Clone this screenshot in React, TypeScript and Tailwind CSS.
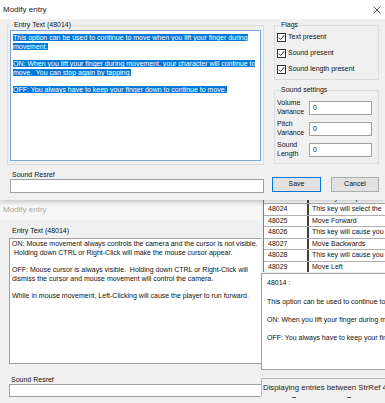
import React from "react";

const Check = () => (
  <div className="w-[9px] h-[9px] bg-white border border-[#333] flex items-center justify-center shrink-0">
    <svg width="7" height="7" viewBox="0 0 7 7">
      <path d="M0.8 3.6 L2.7 5.5 L6.2 1.2" fill="none" stroke="#222" strokeWidth="0.9" />
    </svg>
  </div>
);

const Sel = ({ children }: { children: React.ReactNode }) => (
  <div className="whitespace-nowrap h-[8.7px]">
    <span className="bg-[#0078d7] text-white">{children}</span>
  </div>
);

const rows: [string, string][] = [
  ["48023", "This key will open the"],
  ["48024", "This key will select the"],
  ["48025", "Move Forward"],
  ["48026", "This key will cause you"],
  ["48027", "Move Backwards"],
  ["48028", "This key will cause you"],
  ["48029", "Move Left"],
];

export default function App() {
  return (
    <div className="w-[385px] h-[403px] overflow-hidden bg-[#f0f0f0] flex flex-col font-['Liberation_Sans',Arial,sans-serif] text-[7px] text-[#111]">
      {/* Top dialog */}
      <div className="h-[200px] shrink-0 flex flex-col bg-[#f0f0f0] relative z-10 shadow-[0_2px_5px_rgba(0,0,0,0.22)]">
        <div className="h-[19px] bg-white flex items-center justify-between pl-[3px] pr-[4px]">
          <span className="text-[8px] text-[#222]">Modify entry</span>
          <svg width="8" height="8" viewBox="0 0 8 8">
            <path d="M0.5 0.5 L7.5 7.5 M7.5 0.5 L0.5 7.5" stroke="#333" strokeWidth="0.8" />
          </svg>
        </div>
        <div className="flex px-[7px] gap-[10px] pt-[2px]">
          {/* Left column */}
          <div className="w-[259px] flex flex-col">
            <fieldset className="border border-[#dcdcdc] px-[2px] pb-[3px]">
              <legend className="ml-[3px] px-[1px] leading-[8px]">Entry Text (48014)</legend>
              <div className="mt-[1px] h-[131px] bg-white border border-[#7aa7d9] px-[2px] pt-[3px] leading-[8.7px] overflow-hidden">
                <Sel>This option can be used to continue to move when you lift your finger during</Sel>
                <Sel>movement.</Sel>
                <div className="h-[8.7px]" />
                <Sel>ON: When you lift your finger during movement, your character will continue to</Sel>
                <Sel>move.&nbsp; You can stop again by tapping.</Sel>
                <div className="h-[8.7px]" />
                <Sel>OFF: You always have to keep your finger down to continue to move.</Sel>
              </div>
            </fieldset>
            <div className="mt-[6px] pl-[5px] leading-[8px] h-[8px]">Sound Resref</div>
            <div className="ml-[3px] w-[254px] h-[14px] bg-white border border-[#a0a0a0]" />
          </div>
          {/* Right column */}
          <div className="w-[105px] flex flex-col">
            <fieldset className="border border-[#dcdcdc] pl-[2px] pb-[2px]">
              <legend className="ml-[3px] px-[1px] leading-[8px]">Flags</legend>
              {["Text present", "Sound present", "Sound length present"].map((t) => (
                <div key={t} className="h-[16px] flex items-center gap-[2px]">
                  <Check />
                  <span className="leading-[8px]">{t}</span>
                </div>
              ))}
            </fieldset>
            <fieldset className="mt-[6px] border border-[#dcdcdc] pl-[2px] pt-[3px] pb-[3px]">
              <legend className="ml-[3px] px-[1px] leading-[8px]">Sound settings</legend>
              {[
                ["Volume", "Variance"],
                ["Pitch", "Variance"],
                ["Sound", "Length"],
              ].map(([a, b]) => (
                <div key={a} className="h-[21px] flex items-center">
                  <div className="w-[32px] leading-[8.5px]">
                    <div>{a}</div>
                    <div>{b}</div>
                  </div>
                  <div className="w-[63px] h-[14px] bg-white border border-[#a0a0a0] flex items-center pl-[3px] leading-[8px]">
                    0
                  </div>
                </div>
              ))}
            </fieldset>
            <div className="mt-[13px] -ml-[2px] flex gap-[10px]">
              <div className="w-[49px] h-[15px] bg-[#e1e1e1] border border-[#0078d7] flex items-center justify-center">
                Save
              </div>
              <div className="w-[48px] h-[15px] bg-[#e1e1e1] border border-[#adadad] flex items-center justify-center">
                Cancel
              </div>
            </div>
          </div>
        </div>
      </div>

      {/* Background windows */}
      <div className="flex-1 flex min-h-0">
        {/* Left background window */}
        <div className="w-[261px] shrink-0 flex flex-col overflow-hidden">
          <div className="h-[20px] bg-[#f7f7f7] flex items-center pl-[3px]">
            <span className="text-[8px] text-[#a6a6a6]">Modify entry</span>
          </div>
          <div className="mt-[7px] pl-[12px] leading-[8px] h-[8px]">Entry Text (48014)</div>
          <div className="mt-[3px] ml-[9px] w-[262px] h-[126px] bg-white border border-[#a0a0a0] pl-[2px] pt-[1px] leading-[8.7px] overflow-hidden whitespace-nowrap">
            <div>ON: Mouse movement always controls the camera and the cursor is not visible.</div>
            <div>&nbsp;Holding down CTRL or Right-Click will make the mouse cursor appear.</div>
            <div className="h-[8.7px]" />
            <div>OFF: Mouse cursor is always visible.&nbsp; Holding down CTRL or Right-Click will</div>
            <div>dismiss the cursor and mouse movement will control the camera.</div>
            <div className="h-[8.7px]" />
            <div>While in mouse movement, Left-Clicking will cause the player to run forward.</div>
          </div>
          <div className="mt-[12px] pl-[11px] leading-[8px] h-[8px]">Sound Resref</div>
          <div className="ml-[9px] w-[254px] h-[13px] bg-white border border-[#a0a0a0]" />
        </div>
        {/* Right background panel */}
        <div className="flex-1 flex flex-col min-w-0 overflow-hidden">
          <div className="ml-[2px] h-[72px] bg-white border-l border-[#808080] overflow-hidden">
            <div className="-mt-[7.5px]">
              {rows.map(([id, txt]) => (
                <div key={id} className="h-[11.5px] flex border-b border-[#b0b0b0]">
                  <div className="w-[45px] shrink-0 pl-[4px] flex items-center border-r-2 border-[#404040] leading-[8px]">
                    {id}
                  </div>
                  <div className="pl-[3px] flex items-center whitespace-nowrap leading-[8px]">{txt}</div>
                </div>
              ))}
            </div>
          </div>
          <div className="mt-[1px] h-[97px] w-[160px] bg-white border border-[#a0a0a0] pl-[5px] pt-[4px] leading-[9px] whitespace-nowrap">
            <div>48014 :</div>
            <div className="h-[9.5px]" />
            <div>This option can be used to continue to move when you lift your finger during movement.</div>
            <div className="h-[9.5px]" />
            <div>ON: When you lift your finger during movement, your character will continue to move.</div>
            <div className="h-[9px]" />
            <div>OFF: You always have to keep your finger down to continue to move.</div>
          </div>
          <div className="mt-[8px] h-[18px] border-l border-t border-[#b8b8b8] flex items-center pl-[1px] whitespace-nowrap text-[7.8px] text-[#222]">
            Displaying entries between StrRef 48000 and 48100
          </div>
          <div className="flex pl-[31px] gap-[51px] mt-[1px]">
            <div className="w-[4px] h-[1px] bg-[#555]" />
            <div className="w-[4px] h-[1px] bg-[#555]" />
          </div>
        </div>
      </div>
    </div>
  );
}
